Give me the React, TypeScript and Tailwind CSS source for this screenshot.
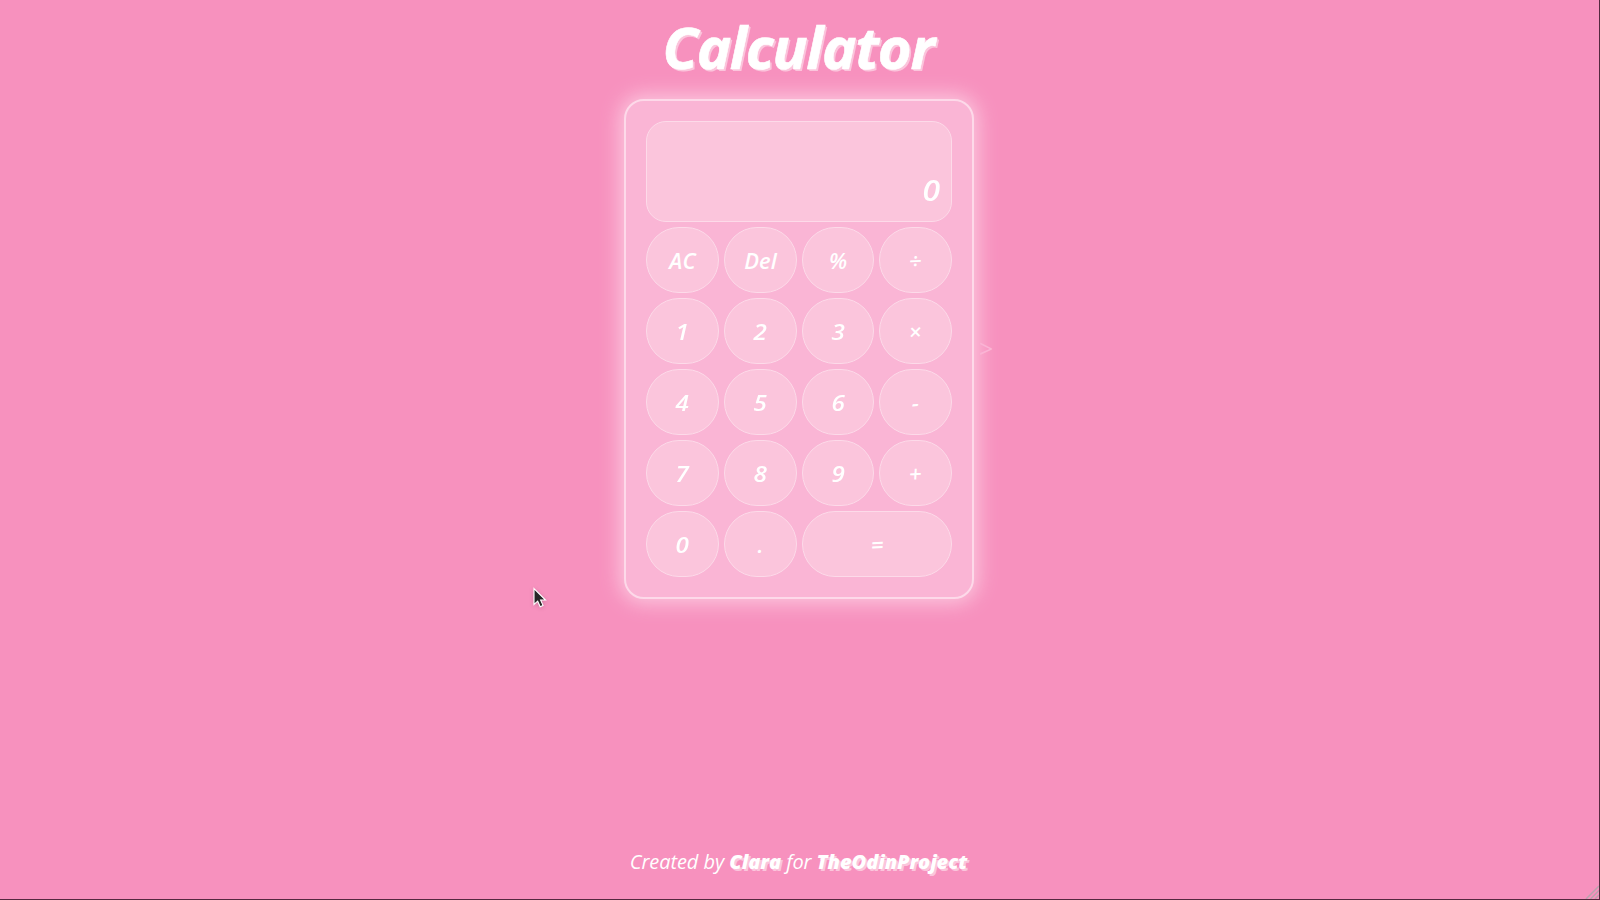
const keys = [
  "AC", "Del", "%", "÷",
  "1", "2", "3", "×",
  "4", "5", "6", "-",
  "7", "8", "9", "+",
  "0", ".", "=",
];

function Key({ label }: { label: string }) {
  const wide = label === "=";
  const operator = "÷×-+=".includes(label);
  const digit = /^\d$/.test(label);
  return (
    <button
      className={`flex items-center justify-center rounded-[33px] border border-[#fddae9] bg-[#fbc5dc] text-[22px] leading-none font-semibold text-white italic ${wide ? "col-span-2" : ""}`}
    >
      <span className={digit ? "scale-x-110" : operator ? "-skew-x-6 -rotate-3" : ""}>{label}</span>
    </button>
  );
}

export default function App() {
  return (
    <div className="relative flex h-[900px] w-[1600px] flex-col items-center overflow-hidden border-r border-b border-[#55283f] bg-[#f791be] font-['Open_Sans','Noto_Sans',sans-serif]">
      <h1 className="mr-[3px] flex h-[99px] shrink-0 items-center pb-[5px] text-[58px] leading-none font-bold tracking-[-1.3px] text-white italic [-webkit-text-stroke:0.6px_white] [text-shadow:1px_1px_0_#fbc5dc,2px_2px_0_#fbc5dc]">
        Calculator
      </h1>

      <main className="relative mr-px grid h-[500px] w-[350px] shrink-0 grid-cols-[73px_73px_72px_73px] grid-rows-[101px_repeat(5,66px)] gap-[5px] rounded-[20px] border-2 border-[#fdd9e9] bg-[#fab5d5] p-5 shadow-[0_0_20px_4px_#fcc8df]">
        <div className="col-span-4 flex items-end justify-end rounded-[20px] border border-[#fddae9] bg-[#fbc5dc] pr-[11px] pb-[17px] text-[29px] leading-none font-semibold text-white italic">
          <span className="origin-right scale-x-110">0</span>
        </div>
        {keys.map((k) => (
          <Key key={k} label={k} />
        ))}
        <span className="absolute top-[235px] left-[353px] text-[25px] leading-none font-medium text-[#fbb4d5]">
          &gt;
        </span>
      </main>

      <footer className="mt-auto mr-[2px] mb-[25px] text-[20px] leading-6 font-medium tracking-[-0.06px] whitespace-nowrap text-white italic">
        Created by{" "}
        <strong className="font-extrabold [text-shadow:2px_2px_0_#fbc5dc]">Clara</strong> for{" "}
        <strong className="font-extrabold [text-shadow:2px_2px_0_#fbc5dc]">TheOdinProject</strong>
      </footer>

      <svg className="absolute top-[587px] left-[533px] drop-shadow-sm" width="14" height="22" viewBox="0 0 14 22">
        <path d="M1 1.5V17.5L4.7 14.2L7.2 19.7L10 18.4L7.6 13H12.5Z" fill="#262626" stroke="#fff" strokeWidth="1.1" />
      </svg>
      <svg className="absolute right-0 bottom-0" width="14" height="14" viewBox="0 0 14 14">
        <path d="M1 14L14 1M5.5 14L14 5.5M10 14L14 10" stroke="#b9a3ad" strokeWidth="1.5" />
      </svg>
    </div>
  );
}
